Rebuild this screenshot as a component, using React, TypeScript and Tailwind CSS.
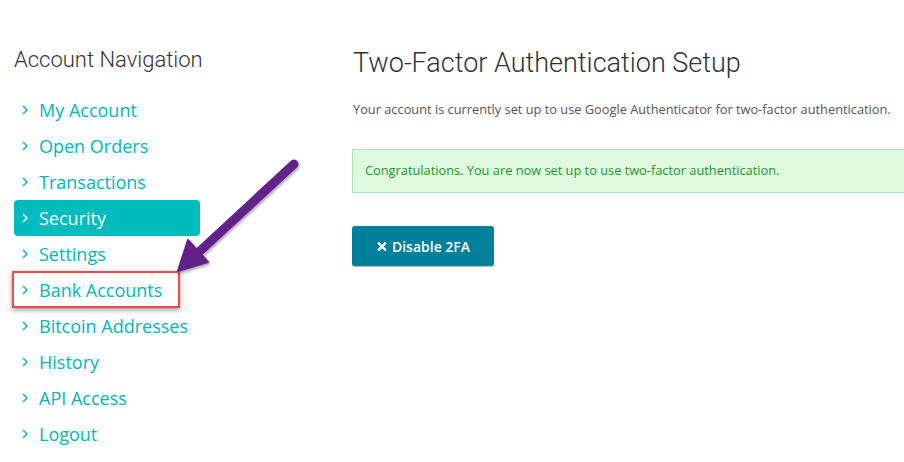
import { FaTimes } from "react-icons/fa";

const items = [
  "My Account",
  "Open Orders",
  "Transactions",
  "Security",
  "Settings",
  "Bank Accounts",
  "Bitcoin Addresses",
  "History",
  "API Access",
  "Logout",
];

function Chevron({ className }: { className?: string }) {
  return (
    <svg viewBox="0 0 6 10" className={className} fill="none" stroke="currentColor" strokeWidth="1.5">
      <polyline points="1,1 5,5 1,9" />
    </svg>
  );
}

export default function App() {
  return (
    <div className="relative w-[904px] h-[462px] bg-white overflow-hidden flex">
      {/* Sidebar */}
      <aside className="w-[339px] shrink-0 pl-[14px] pt-[45px]">
        <h3 className="text-[22px] leading-[30px] font-light text-[#333] font-['Roboto',sans-serif]">
          Account Navigation
        </h3>
        <ul className="mt-[17px] w-[186px] font-['Open_Sans',sans-serif]">
          {items.map((it) => (
            <li
              key={it}
              className={
                it === "Security"
                  ? "h-[36px] flex items-center pl-[8px] rounded bg-[#00bcbc] text-white"
                  : "h-[36px] flex items-center pl-[8px] text-[#00b8b8]"
              }
            >
              <Chevron className="w-[6px] h-[10px] mr-[11px]" />
              <span className="text-[18px] leading-none">{it}</span>
            </li>
          ))}
        </ul>
      </aside>

      {/* Main */}
      <main className="pt-[44px] flex-1 font-['Open_Sans',sans-serif]">
        <h1 className="ml-[14px] text-[27px] leading-[38px] font-light text-[#333] font-['Roboto',sans-serif]">
          Two-Factor Authentication Setup
        </h1>
        <p className="ml-[14px] mt-[18px] text-[12.8px] leading-[18px] text-[#555]">
          Your account is currently set up to use Google Authenticator for two-factor authentication.
        </p>
        <div className="ml-[13px] mt-[31px] -mr-[10px] h-[44px] flex items-center px-[12px] bg-[#dff8e0] border border-[#aee6b0] text-[#1a9a2a] text-[12.8px]">
          Congratulations. You are now set up to use two-factor authentication.
        </div>
        <button className="ml-[13px] mt-[33px] w-[142px] h-[40px] flex items-center justify-center gap-[4px] rounded-[3px] bg-[#00809a] text-white text-[14px] font-semibold shadow-[0_1px_1px_rgba(0,0,0,0.3)]">
          <FaTimes className="w-[12px] h-[13px]" />
          Disable 2FA
        </button>
      </main>

      {/* Annotation overlay */}
      <div className="absolute left-[12px] top-[271px] w-[168px] h-[37px] border-2 border-[#f24848] shadow-[0_2px_5px_rgba(0,0,0,0.4)]" />
      <svg className="absolute left-0 top-0 pointer-events-none" width="904" height="462">
        <defs>
          <filter id="sh" x="-20%" y="-20%" width="140%" height="140%">
            <feDropShadow dx="1" dy="2" stdDeviation="1.5" floodColor="#000" floodOpacity="0.35" />
          </filter>
        </defs>
        <g filter="url(#sh)" fill="#62208a" stroke="#62208a">
          <line x1="294" y1="164" x2="200" y2="251" strokeWidth="9" strokeLinecap="round" />
          <polygon points="178,271 188,240 208,262" strokeWidth="2" strokeLinejoin="round" />
        </g>
      </svg>
    </div>
  );
}
